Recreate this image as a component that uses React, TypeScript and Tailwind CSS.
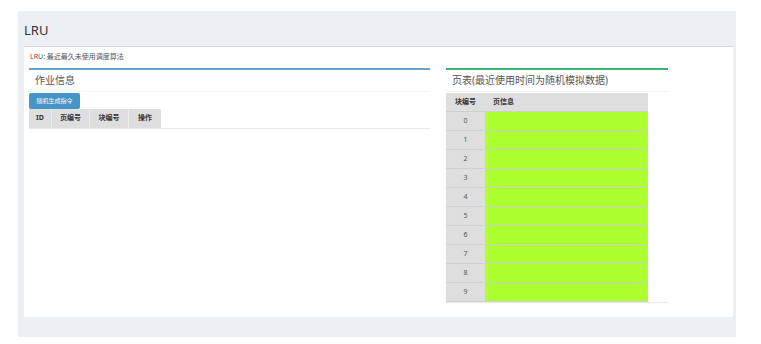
import React from "react";

const font = { fontFamily: '"Noto Sans", "Noto Sans CJK SC", sans-serif' };

export default function App() {
  const rows = [0, 1, 2, 3, 4, 5, 6, 7, 8, 9];
  return (
    <div className="w-[761px] h-[344px] bg-white overflow-hidden" style={font}>
      <div className="ml-[18px] mt-[11px] w-[718px] h-[326px] bg-[#ecf0f5] flex flex-col">
        <div className="h-[35px] flex items-center pl-[6px] pt-[4px] text-[13px] text-[#333]">LRU</div>
        <div className="ml-[6px] w-[709px] h-[271px] bg-white border-t border-[#d2d6de] flex flex-col">
          <div className="h-[21px] flex items-center pl-[6px] text-[7px] text-[#555]">LRU: 最近最久未使用调度算法</div>
          <div className="flex items-start pl-[5px] gap-[16px]">
            <div className="w-[401px] border-t-2 border-[#66a4cc] bg-white shadow-[0_1px_1px_rgba(0,0,0,0.08)]">
              <div className="h-[22px] flex items-center pl-[6px] text-[10px] text-[#555] border-b border-[#f4f4f4]">作业信息</div>
              <div className="pt-[1px]">
                <div className="w-[51px] h-[16px] bg-[#4596c6] rounded-[2px] text-white text-[6px] flex items-center justify-center">随机生成指令</div>
              </div>
              <div className="flex h-[19px] text-[7px] font-bold text-[#333]">
                <div className="w-[23px] bg-[#dedede] border-r border-[#ececec] flex items-center justify-center">ID</div>
                <div className="w-[38px] bg-[#dedede] border-r border-[#ececec] flex items-center justify-center">页编号</div>
                <div className="w-[39px] bg-[#dedede] border-r border-[#ececec] flex items-center justify-center">块编号</div>
                <div className="w-[32px] bg-[#dedede] flex items-center justify-center">操作</div>
              </div>
            </div>
            <div className="w-[222px] border-t-2 border-[#3db37c] bg-white shadow-[0_1px_1px_rgba(0,0,0,0.08)]">
              <div className="h-[22px] flex items-center pl-[6px] text-[10px] text-[#555] border-b border-[#f4f4f4]">页表(最近使用时间为随机模拟数据)</div>
              <div className="w-[202px] pt-[1px]">
                <div className="flex h-[19px] text-[7px] font-bold text-[#333] bg-[#dedede] border-b border-[#cfcfcf]">
                  <div className="w-[39px] flex items-center justify-center">块编号</div>
                  <div className="flex-1 flex items-center pl-[8px]">页信息</div>
                </div>
                {rows.map((r) => (
                  <div key={r} className="flex h-[19px] border-b border-[#d0d0d0]">
                    <div className="w-[39px] bg-[#dedede] flex items-center justify-center text-[7px] text-[#555]">{r}</div>
                    <div className="flex-1 bg-[#adff2f]" />
                  </div>
                ))}
              </div>
            </div>
          </div>
        </div>
      </div>
    </div>
  );
}
